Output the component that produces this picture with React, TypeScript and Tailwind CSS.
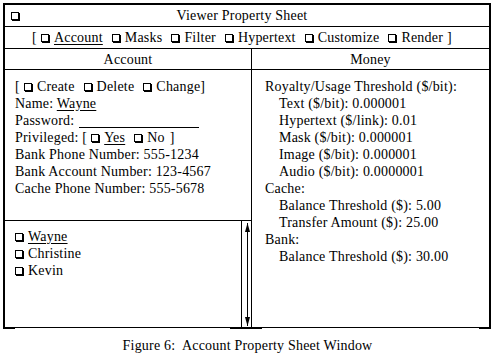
import React from "react";

function Box() {
  return (
    <span className="inline-block w-[8px] h-[8px] border border-black shadow-[1px_1px_0_0_#000] mr-[5px] shrink-0" />
  );
}

function Opt({ label, on = false }: { label: string; on?: boolean }) {
  return (
    <span className="inline-flex items-center mr-[9px]">
      <Box />
      <span className={on ? "underline underline-offset-2" : ""}>{label}</span>
    </span>
  );
}

const TABS = ["Account", "Masks", "Filter", "Hypertext", "Customize", "Render"];

const MONEY: { text: string; indent?: boolean }[] = [
  { text: "Royalty/Usage Threshold ($/bit):" },
  { text: "Text ($/bit): 0.000001", indent: true },
  { text: "Hypertext ($/link): 0.01", indent: true },
  { text: "Mask ($/bit): 0.000001", indent: true },
  { text: "Image ($/bit): 0.000001", indent: true },
  { text: "Audio ($/bit): 0.0000001", indent: true },
  { text: "Cache:" },
  { text: "Balance Threshold ($): 5.00", indent: true },
  { text: "Transfer Amount ($): 25.00", indent: true },
  { text: "Bank:" },
  { text: "Balance Threshold ($): 30.00", indent: true },
];

const USERS = ["Wayne", "Christine", "Kevin"];

export default function App() {
  return (
    <div className="w-[495px] h-[356px] bg-white text-black font-['Liberation_Serif',serif] text-[14px] leading-[17px] tracking-[0.2px] pt-[3px]">
      {/* Window */}
      <div className="relative ml-[3px] w-[488px] h-[325px] border-l-2 border-t-2 border-r-2 border-b border-black flex flex-col">
        {/* Title bar */}
        <div className="h-[22px] border-b border-black flex items-center relative shrink-0">
          <span className="absolute left-[6px] top-[7px] w-[8px] h-[8px] border border-black shadow-[1px_1px_0_0_#000]" />
          <div className="flex-1 text-center pr-[10px]">Viewer Property Sheet</div>
        </div>

        {/* Toolbar */}
        <div className="h-[22px] border-b border-black flex items-center justify-center shrink-0 pr-[10px]">
          <span className="mr-[4px]">[</span>
          {TABS.map((t) => (
            <Opt key={t} label={t} on={t === "Account"} />
          ))}
          <span className="-ml-[5px]">]</span>
        </div>

        {/* Body */}
        <div className="flex-1 flex min-h-0">
          {/* Account column */}
          <div className="w-[247px] border-r border-black flex flex-col">
            <div className="h-[21px] border-b border-black flex items-center justify-center shrink-0">
              Account
            </div>
            <div className="h-[151px] border-b border-black pt-[8px] pl-[10px] shrink-0">
              <div className="flex items-center">
                <span className="mr-[4px]">[</span>
                <Opt label="Create" />
                <Opt label="Delete" />
                <span className="inline-flex items-center">
                  <Box />
                  Change]
                </span>
              </div>
              <div>
                Name: <span className="underline underline-offset-2">Wayne</span>
              </div>
              <div className="flex items-center">
                Password:
                <span className="inline-block w-[120px] h-[13px] border-b border-black ml-[5px] mt-[1px]" />
              </div>
              <div className="flex items-center">
                <span className="mr-[4px]">Privileged: [</span>
                <Opt label="Yes" on />
                <Opt label="No" />
                <span className="-ml-[4px]">]</span>
              </div>
              <div>Bank Phone Number: 555-1234</div>
              <div>Bank Account Number: 123-4567</div>
              <div>Cache Phone Number: 555-5678</div>
            </div>
            <div className="flex-1 flex">
              <div className="flex-1 pt-[7px] pl-[10px]">
                {USERS.map((u, i) => (
                  <div key={u} className="flex items-center">
                    <Box />
                    <span className={i === 0 ? "underline underline-offset-2" : ""}>{u}</span>
                  </div>
                ))}
              </div>
              {/* Scroll bar */}
              <div className="w-[10px] border-l border-black">
                <svg width="9" height="106" viewBox="0 0 9 106" className="block">
                  <line x1="5.5" y1="2" x2="5.5" y2="105" stroke="#000" strokeWidth="1" />
                  <polygon points="5.5,2 3,11 8,11" fill="#000" />
                  <polygon points="5.5,105 3,96 8,96" fill="#000" />
                </svg>
              </div>
            </div>
          </div>

          {/* Money column */}
          <div className="flex-1 flex flex-col">
            <div className="h-[21px] border-b border-black flex items-center justify-center shrink-0">
              Money
            </div>
            <div className="pt-[8px] pl-[13px]">
              {MONEY.map((m, i) => (
                <div key={i} className={m.indent ? "pl-[14px]" : ""}>
                  {m.text}
                </div>
              ))}
            </div>
          </div>
        </div>

        {/* thick bits on the bottom edge */}
        <span className="absolute -left-[2px] -bottom-[2px] w-[12px] h-[2px] bg-black" />
        <span className="absolute left-[225px] -bottom-[2px] w-[32px] h-[2px] bg-black" />
        <span className="absolute -right-[2px] -bottom-[2px] w-[12px] h-[2px] bg-black" />
      </div>

      {/* Caption */}
      <div className="mt-[9px] text-center">Figure 6:&nbsp; Account Property Sheet Window</div>
    </div>
  );
}
